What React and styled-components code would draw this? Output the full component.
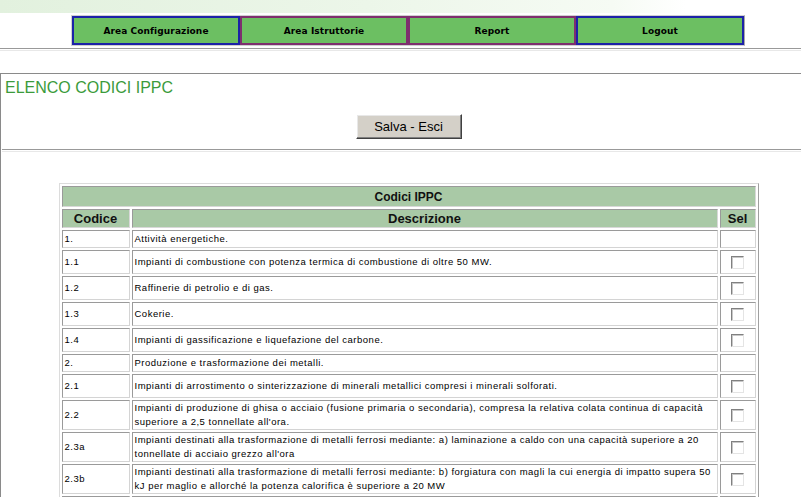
import styled, { createGlobalStyle } from 'styled-components';

const GlobalStyle = createGlobalStyle`
    html, body {
        margin: 0;
        padding: 0;
        background: #ffffff;
        overflow: hidden;
    }
    body {
        font-family: "Liberation Sans", Arial, sans-serif;
    }
`

const Page = styled.div`
    width: 816px;
`
const TopBand = styled.div`
    height: 13px;
    background: linear-gradient(to right, #e2f1de 0%, #ecf6e9 45%, #f6fbf4 75%, #ffffff 84%);
`
const NavWrapper = styled.nav`
    margin: 2px auto 0;
    width: 672px;
    display: flex;
    border: 1px solid #d0d0d0;
    border-right-color: #a8a8a8;
`
const NavButton = styled.div`
    flex: 1;
    height: 25px;
    box-sizing: content-box;
    border: 2px solid ${p => p.$accent};
    background: #6cbf62;
    display: flex;
    align-items: center;
    justify-content: center;
    font-family: "DejaVu Sans", Verdana, sans-serif;
    font-weight: bold;
    font-size: 9px;
    letter-spacing: 0.1px;
    color: #000;
`
const Rule = styled.div`
    height: 1px;
    border-top: 1px solid #999;
    border-bottom: 1px solid #e8e8e8;
    margin: ${p => p.$margin || '2px 0 0'};
`
const Panel = styled.section`
    margin-top: 22px;
    border-top: 1px solid #8a8a8a;
    border-left: 1px solid #8a8a8a;
    padding: 5px 0 0;
`
const Title = styled.h1`
    margin: 0 0 0 4px;
    font-family: "Liberation Sans", Arial, sans-serif;
    font-weight: normal;
    font-size: 16px;
    line-height: 18px;
    color: #3b9b3b;
`
const ButtonRow = styled.div`
    display: flex;
    justify-content: center;
    margin-top: 17px;
`
const WinButton = styled.button`
    width: 106px;
    height: 25px;
    background: #d4d0c8;
    border: 1px solid;
    border-color: #ffffff #404040 #404040 #ffffff;
    box-shadow: inset -1px -1px 0 #808080, inset 1px 1px 0 #e8e8e8;
    font-family: "Liberation Sans", Arial, sans-serif;
    font-size: 13px;
    color: #000;
    padding: 0 0 1px;
`
const Table = styled.table`
    width: 700px;
    margin: 31px auto 0;
    border-collapse: separate;
    border-spacing: 2px;
    border: 1px solid;
    border-color: #dcdcdc #a0a0a0 #a0a0a0 #dcdcdc;
`
const Caption = styled.th`
    box-sizing: border-box;
    background: #a9c9a6;
    border: 1px solid;
    border-color: #9a9a9a #d8d8d8 #d8d8d8 #9a9a9a;
    font-family: "Liberation Sans", Arial, sans-serif;
    font-weight: bold;
    font-size: 12px;
    height: 21px;
    padding: 0;
    color: #111;
`
const HeadCell = styled.th`
    box-sizing: border-box;
    background: #a9c9a6;
    border: 1px solid;
    border-color: #9a9a9a #d8d8d8 #d8d8d8 #9a9a9a;
    font-family: "Liberation Sans", Arial, sans-serif;
    font-weight: bold;
    font-size: 13px;
    height: 19px;
    padding: 0;
    width: ${p => p.$w};
    color: #111;
`
const Cell = styled.td`
    box-sizing: border-box;
    border: 1px solid;
    border-color: #9a9a9a #d4d4d4 #d4d4d4 #9a9a9a;
    font-family: "Liberation Sans", Arial, sans-serif;
    font-size: 9.5px;
    letter-spacing: 0.5px;
    line-height: 14px;
    padding: 0 2px;
    height: 18px;
    vertical-align: middle;
    text-align: ${p => p.$center ? 'center' : 'left'};
    color: #000;
`
const Check = styled.span`
    display: block;
    box-sizing: border-box;
    width: 13px;
    height: 13px;
    margin: 5px auto 4px;
    background: #fff;
    border: 1px solid;
    border-color: #808080 #e4e4e4 #e4e4e4 #808080;
    box-shadow: inset 1px 1px 0 #c8c8c8;
`

const rows = [
    ['1.', 'Attività energetiche.', false],
    ['1.1', 'Impianti di combustione con potenza termica di combustione di oltre 50 MW.', true],
    ['1.2', 'Raffinerie di petrolio e di gas.', true],
    ['1.3', 'Cokerie.', true],
    ['1.4', 'Impianti di gassificazione e liquefazione del carbone.', true],
    ['2.', 'Produzione e trasformazione dei metalli.', false],
    ['2.1', 'Impianti di arrostimento o sinterizzazione di minerali metallici compresi i minerali solforati.', true],
    ['2.2', "Impianti di produzione di ghisa o acciaio (fusione primaria o secondaria), compresa la relativa colata continua di capacità superiore a 2,5 tonnellate all'ora.", true],
    ['2.3a', "Impianti destinati alla trasformazione di metalli ferrosi mediante: a) laminazione a caldo con una capacità superiore a 20 tonnellate di acciaio grezzo all'ora", true],
    ['2.3b', 'Impianti destinati alla trasformazione di metalli ferrosi mediante: b) forgiatura con magli la cui energia di impatto supera 50 kJ per maglio e allorché la potenza calorifica è superiore a 20 MW', true],
    ['2.3c', "Impianti destinati alla trasformazione di metalli ferrosi mediante: c) applicazione di strati protettivi di metallo fuso con una capacità di trattamento superiore a 2 tonnellate di acciaio grezzo all'ora", true],
];

const navItems = [
    ['Area Configurazione', '#1c22a8'],
    ['Area Istruttorie', '#7e2f6e'],
    ['Report', '#7e2f6e'],
    ['Logout', '#1c22a8'],
];

export const App = () => {
    return (
        <>
            <GlobalStyle />
            <Page>
                <TopBand />
                <NavWrapper>
                    {navItems.map(([label, accent]) => (
                        <NavButton key={label} $accent={accent}>{label}</NavButton>
                    ))}
                </NavWrapper>
                <Rule $margin="2px 0 0" />
                <Panel>
                    <Title>ELENCO CODICI IPPC</Title>
                    <ButtonRow>
                        <WinButton>Salva - Esci</WinButton>
                    </ButtonRow>
                    <Rule $margin="10px 0 0 1px" />
                    <Table>
                        <thead>
                            <tr>
                                <Caption colSpan={3}>Codici IPPC</Caption>
                            </tr>
                            <tr>
                                <HeadCell $w="68px">Codice</HeadCell>
                                <HeadCell>Descrizione</HeadCell>
                                <HeadCell $w="36px">Sel</HeadCell>
                            </tr>
                        </thead>
                        <tbody>
                            {rows.map(([code, desc, sel]) => (
                                <tr key={code}>
                                    <Cell>{code}</Cell>
                                    <Cell>{desc}</Cell>
                                    <Cell $center>{sel && <Check />}</Cell>
                                </tr>
                            ))}
                        </tbody>
                    </Table>
                </Panel>
            </Page>
        </>
    )
}

export default App
